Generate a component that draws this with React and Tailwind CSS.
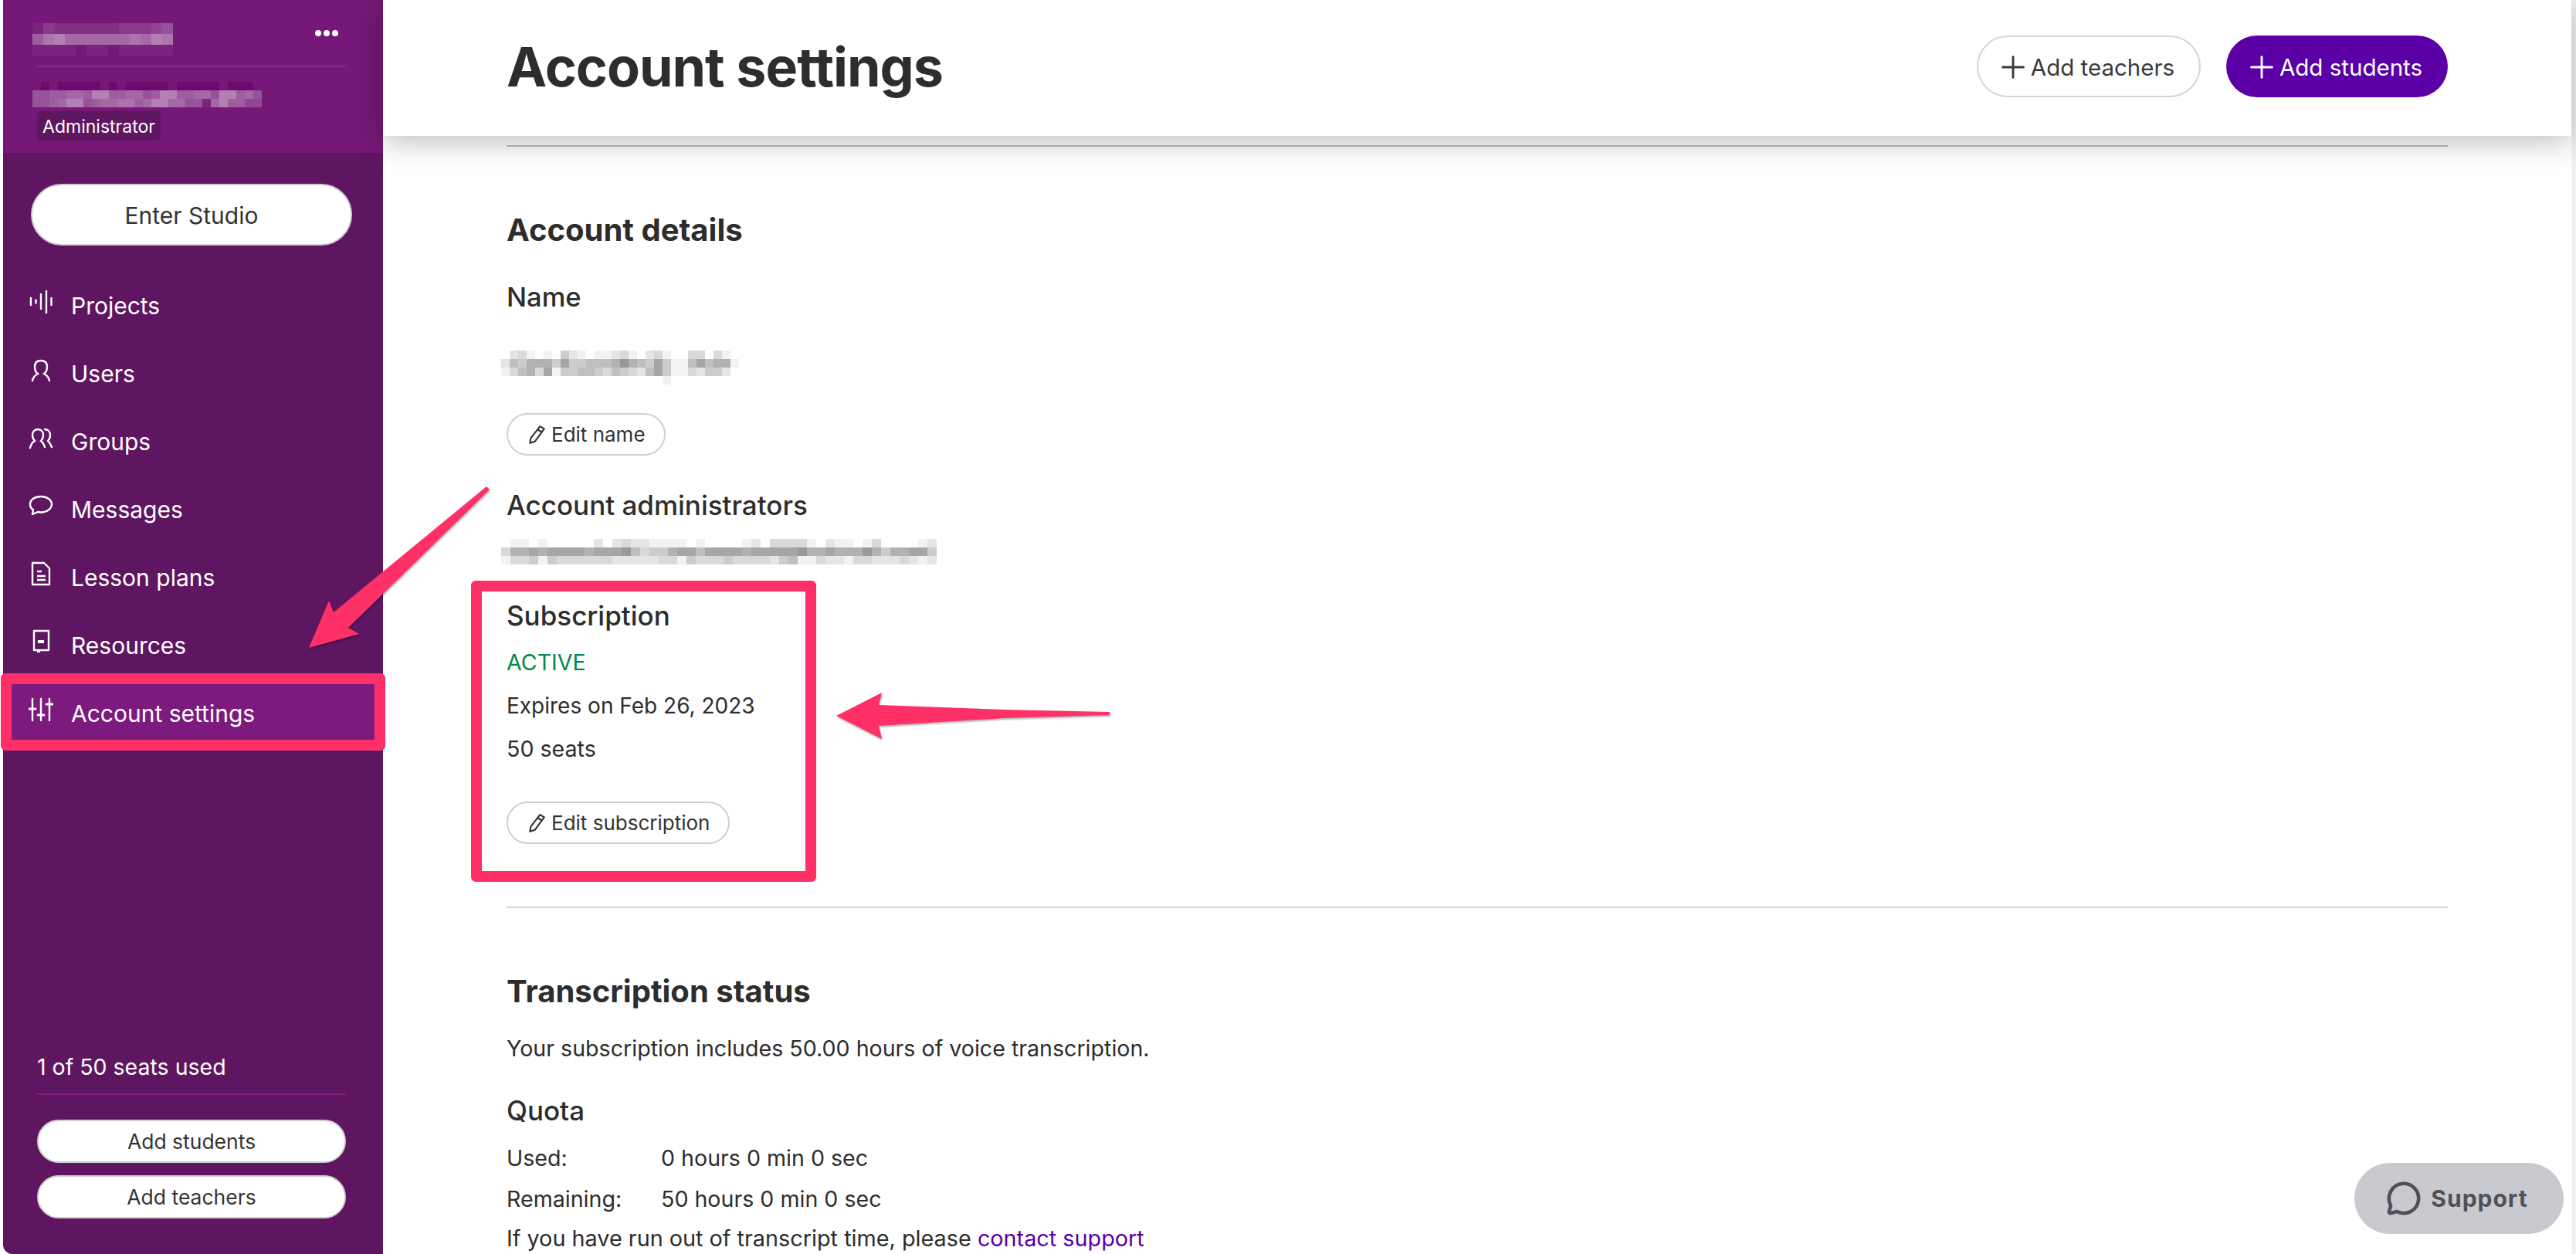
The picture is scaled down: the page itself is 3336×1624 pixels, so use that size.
import { MessageCircle, Plus } from 'lucide-react';

const NAME_PIXELS = [
  '02310104210112310231003303100',
  '25466647445556865474115756610',
  '13563714455435432574113244200',
  '00000000000000000001000000000',
];

const ADMIN_PIXELS = [
  '01101000002023221111010000120333310211013000012',
  '36676777767778534467757777677777866766686466774',
  '13341433333322222331433343333245113221332223212',
];

const TOP_PIXELS = [
  '1322222233345',
  '6897777778798',
  '1111011011111',
];

const SUB_PIXELS = [
  '000000000000000000000000000',
  '0a0aaaaa0a0aaaaa0aaaaa0aaa0',
  '556677699667756996677599675',
  '556799567788679977551796644',
];

function Pixels({ rows, color = 'bg-white', cell = 'h-[11px] w-[11px]' }) {
  return (
    <div className="flex flex-col">
      {rows.map((row, y) => (
        <div key={y} className="flex">
          {row.split('').map((ch, x) => {
            const dark = ch === 'a';
            return (
              <span
                key={x}
                className={`${cell} ${dark ? 'bg-[#6a0a6c]' : color}`}
                style={{ opacity: dark ? 0.9 : Number(ch) * 0.05 }}
              />
            );
          })}
        </div>
      ))}
    </div>
  );
}

function ProjectsIcon() {
  return (
    <svg viewBox="0 0 32 32" className="h-8 w-8 shrink-0 -translate-y-[5px]" fill="none" stroke="currentColor" strokeWidth="2.4" strokeLinecap="round">
      <path d="M3 11v9M9.5 13.5v4M16 6v19M23 2v28M29.5 11v9" />
    </svg>
  );
}

function UsersIcon() {
  return (
    <svg viewBox="0 0 32 32" className="h-8 w-8 shrink-0 -translate-y-[5px]" fill="none" stroke="currentColor" strokeWidth="2.4" strokeLinecap="round">
      <path d="M5 30c1-4 3-7 7-9-3-2-4-5-4-9 0-5 3-8 8-8s8 3 8 8c0 4-1 7-4 9 4 2 6 5 7 9" />
    </svg>
  );
}

function GroupsIcon() {
  return (
    <svg viewBox="0 0 32 32" className="h-8 w-8 shrink-0 -translate-y-[5px]" fill="none" stroke="currentColor" strokeWidth="2.4" strokeLinecap="round">
      <path d="M2 29c1-4 2-7 6-9-2-2-3-4-3-8 0-4 3-7 7-7s7 3 7 7c0 4-1 6-3 8 3 2 4 5 5 8" />
      <path d="M21 5c4 0 7 3 7 7 0 4-1 6-3 8 2 2 4 5 5 8" />
    </svg>
  );
}

function MessagesIcon() {
  return (
    <svg viewBox="0 0 32 32" className="h-8 w-8 shrink-0 -translate-y-[5px]" fill="none" stroke="currentColor" strokeWidth="2.4" strokeLinecap="round" strokeLinejoin="round">
      <path d="M16 4C8 4 2 8 2 14c0 3 2 6 4 7l-1 6 7-3c1 0 3 .5 4 .5 8 0 14-5 14-10.500S24 4 16 4z" />
    </svg>
  );
}

function LessonIcon() {
  return (
    <svg viewBox="0 0 32 32" className="h-8 w-8 shrink-0 -translate-y-[5px]" fill="none" stroke="currentColor" strokeWidth="2.4" strokeLinejoin="round">
      <path d="M5 2h15l7 7v21H5z" />
      <path d="M11 13h6M11 19h11M11 24h11" />
    </svg>
  );
}

function ResourcesIcon() {
  return (
    <svg viewBox="0 0 32 32" className="h-8 w-8 shrink-0 -translate-y-[5px]" fill="none" stroke="currentColor" strokeWidth="2.4" strokeLinejoin="round">
      <path d="M7 2h19v25H7z" />
      <path d="M12 14h8v4h-8z" fill="currentColor" stroke="none" />
      <path d="M11 27v4l2-2 2 2v-4" fill="currentColor" stroke="none" />
    </svg>
  );
}

function SlidersIcon() {
  return (
    <svg viewBox="0 0 32 32" className="h-8 w-8 shrink-0 -translate-y-[5px]" fill="none" stroke="currentColor" strokeWidth="2.4" strokeLinecap="round">
      <path d="M5 2v28M16 2v28M27 2v28" />
      <path d="M1 15h8M12 23h8M23 9h8" strokeWidth="3" />
    </svg>
  );
}

function PencilIcon() {
  return (
    <svg viewBox="0 0 24 24" className="h-[26px] w-[26px] shrink-0" fill="none" stroke="currentColor" strokeWidth="2" strokeLinejoin="round">
      <path d="M16 2l5 3-11 15-6 2 1-6z" />
      <path d="M13.500 6l5 3" />
    </svg>
  );
}

const NAV = [
  { label: 'Projects', icon: ProjectsIcon },
  { label: 'Users', icon: UsersIcon },
  { label: 'Groups', icon: GroupsIcon },
  { label: 'Messages', icon: MessagesIcon },
  { label: 'Lesson plans', icon: LessonIcon },
  { label: 'Resources', icon: ResourcesIcon },
  { label: 'Account settings', icon: SlidersIcon, active: true },
];

function Sidebar() {
  return (
    <aside className="flex h-full w-[492px] shrink-0 flex-col rounded-bl-[12px] bg-[#5f1661] text-white">
      <div className="flex h-[198px] shrink-0 flex-col bg-[#751877] pl-[38px] pr-[48px] pt-[30px]">
        <div className="flex h-[42px] items-start justify-between">
          <Pixels rows={TOP_PIXELS} cell="h-[14px] w-[14px]" />
          <div className="mr-[10px] mt-[9px] flex gap-[3px]">
            <span className="h-[8px] w-[8px] rounded-full bg-white" />
            <span className="h-[8px] w-[8px] rounded-full bg-white" />
            <span className="h-[8px] w-[8px] rounded-full bg-white" />
          </div>
        </div>
        <div className="ml-[6px] mt-[13px] h-[2px] bg-[#84288a]" />
        <div className="mt-[8px] h-[37px]">
          <Pixels rows={SUB_PIXELS} />
        </div>
        <span className="ml-[6px] mt-[12px] flex h-[38px] w-[160px] items-center justify-center rounded-[4px] bg-[#5f1661] pt-[2px] text-[23px]">Administrator</span>
      </div>

      <button type="button" className="ml-[36px] mr-[40px] mt-[40px] flex h-[80px] shrink-0 items-center justify-center rounded-full border-2 border-[#cfcfcf] bg-white pt-[2px] text-[30px] text-[#333]">
        Enter Studio
      </button>

      <nav className="mt-[34px] flex flex-col">
        {NAV.map((item) => {
          const Icon = item.icon;
          return (
            <a key={item.label} className={`flex h-[88px] items-center gap-[23px] pl-[33px] text-[30px] ${item.active ? 'bg-[#7d1a7d]' : ''}`}>
              <Icon />
              {item.label}
            </a>
          );
        })}
      </nav>

      <div className="mt-auto pb-[46px] pl-[44px] pr-[48px]">
        <p className="pt-[2px] text-[28.500px] leading-[40px]">1 of 50 seats used</p>
        <div className="mt-[14px] h-[2px] bg-[#7f1d80]" />
        <button type="button" className="mt-[32px] flex h-[56px] w-full items-center justify-center rounded-full border-2 border-[#cfcfcf] bg-white pt-[2px] text-[26.500px] text-[#333]">
          Add students
        </button>
        <button type="button" className="mt-[16px] flex h-[56px] w-full items-center justify-center rounded-full border-2 border-[#cfcfcf] bg-white pt-[2px] text-[26.500px] text-[#333]">
          Add teachers
        </button>
      </div>
    </aside>
  );
}

function EditButton({ children }) {
  return (
    <button type="button" className="flex h-[55px] w-fit items-center gap-[6px] rounded-full border-2 border-[#d0d0d0] bg-white pl-[24px] pr-[24px] text-[26px] text-[#333]">
      <PencilIcon />
      {children}
    </button>
  );
}

function Header() {
  return (
    <header className="relative z-10 flex h-[176px] shrink-0 items-center justify-between bg-white px-[160px] pb-[4px] shadow-[0_8px_36px_rgba(0,0,0,0.25)]">
      <h1 className="text-[70px] font-bold tracking-[-1px] text-[#2d2d2d]">Account settings</h1>
      <div className="flex gap-[33px]">
        <button type="button" className="flex h-[80px] w-[290px] items-center justify-center rounded-full border-2 border-[#d5d5d5] bg-white pt-[2px] text-[29.500px] text-[#3a3a3a]">
          <Plus size={46} strokeWidth={1.5} className="-ml-[10px]" />
          Add teachers
        </button>
        <button type="button" className="flex h-[80px] w-[287px] items-center justify-center rounded-full bg-[#5a00a6] pt-[2px] text-[29.500px] text-white">
          <Plus size={46} strokeWidth={1.5} className="-ml-[10px]" />
          Add students
        </button>
      </div>
    </header>
  );
}

function Content() {
  return (
    <div className="flex-1 overflow-hidden px-[160px] text-[#2d2d2d]">
      <div className="mt-[12px] h-[2px] bg-[#bdbdbd]" />
      <h2 className="mt-[84px] text-[40px] font-bold leading-[48px]">Account details</h2>
      <h3 className="mt-[41px] text-[34.500px] font-medium leading-[44px]">Name</h3>
      <div className="-ml-[7px] mt-[47px]">
        <Pixels rows={NAME_PIXELS} color="bg-black" />
      </div>
      <div className="mt-[37px]">
        <EditButton>Edit name</EditButton>
      </div>
      <h3 className="mt-[42px] text-[35px] font-medium leading-[44px]">Account administrators</h3>
      <div className="-ml-[7px] mt-[22px]">
        <Pixels rows={ADMIN_PIXELS} color="bg-black" cell="h-[11px] w-[12px]" />
      </div>
      <h3 className="mt-[44px] text-[35px] font-medium leading-[44px]">Subscription</h3>
      <p className="mt-[19px] text-[28.600px] leading-[40px] text-[#008a45]">ACTIVE</p>
      <p className="mt-[16px] text-[28px] leading-[40px]">Expires on Feb 26, 2023</p>
      <p className="mt-[16px] text-[28.600px] leading-[40px]">50 seats</p>
      <div className="mt-[48px]">
        <EditButton>Edit subscription</EditButton>
      </div>
      <div className="mt-[81px] h-[2px] bg-[#d5d5d5]" />
      <h2 className="mt-[84px] text-[40px] font-bold leading-[48px]">Transcription status</h2>
      <p className="mt-[30px] text-[28.600px] leading-[40px]">Your subscription includes 50.00 hours of voice transcription.</p>
      <h3 className="mt-[38px] text-[35px] font-medium leading-[44px]">Quota</h3>
      <div className="mt-[13px] grid grid-cols-[200px_1fr] text-[28.600px] leading-[53px]">
        <span>Used:</span>
        <span>0 hours 0 min 0 sec</span>
        <span>Remaining:</span>
        <span>50 hours 0 min 0 sec</span>
      </div>
      <p className="text-[28.800px] leading-[50px]">
        If you have run out of transcript time, please <a className="text-[#5a00a6]">contact support</a>
      </p>
    </div>
  );
}

function Annotations() {
  return (
    <>
      <div className="absolute left-[1px] top-[872px] h-[100px] w-[498px] rounded-[6px] border-[14px] border-[#ff3068]" />
      <div className="absolute left-[610px] top-[752px] h-[390px] w-[447px] rounded-[6px] border-[14px] border-[#ff3068]" />
      <svg className="pointer-events-none absolute left-0 top-0 h-[1624px] w-[3336px] drop-shadow-[1px_2px_1px_rgba(0,0,0,0.3)]" viewBox="0 0 3336 1624">
        <polygon points="400,839 426,778 432,793 630,630 634,634 451,813 465,821" fill="#ff3068" />
        <polygon points="1083,927 1142,897 1138,913 1300,919 1437,922 1437,926 1300,930 1138,940 1142,957" fill="#ff3068" />
      </svg>
    </>
  );
}

export default function App() {
  return (
    <div className='relative flex h-[1624px] w-[3336px] overflow-hidden bg-white pl-[4px] font-["Inter","Liberation_Sans",sans-serif]'>
      <Sidebar />
      <main className="flex min-w-0 flex-1 flex-col">
        <Header />
        <Content />
      </main>
      <div className="w-[6px] shrink-0 bg-[#f1f1f1]" />
      <Annotations />
      <button type="button" className="absolute left-[3049px] top-[1506px] flex h-[92px] w-[271px] items-center justify-center gap-[12px] rounded-full bg-[#c9cad0] pr-[5px] text-[30px] font-bold tracking-[1px] text-[#4f5058]">
        <MessageCircle size={46} strokeWidth={2.4} />
        Support
      </button>
    </div>
  );
}
